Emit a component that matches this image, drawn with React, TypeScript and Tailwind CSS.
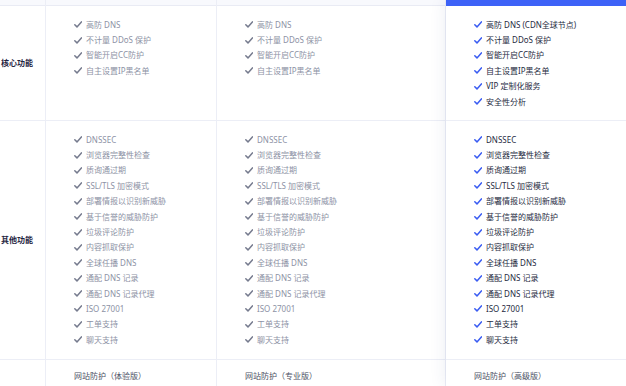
const core1 = ["高防 DNS", "不计量 DDoS 保护", "智能开启CC防护", "自主设置IP黑名单"];
const core3 = ["高防 DNS (CDN全球节点)", "不计量 DDoS 保护", "智能开启CC防护", "自主设置IP黑名单", "VIP 定制化服务", "安全性分析"];
const other = [
  "DNSSEC",
  "浏览器完整性检查",
  "质询通过期",
  "SSL/TLS 加密模式",
  "部署情报以识别新威胁",
  "基于信誉的威胁防护",
  "垃圾评论防护",
  "内容抓取保护",
  "全球任播 DNS",
  "通配 DNS 记录",
  "通配 DNS 记录代理",
  "ISO 27001",
  "工单支持",
  "聊天支持",
];

function Check({ active }: { active?: boolean }) {
  return (
    <svg width="8" height="7" viewBox="0 0 8 7" className="shrink-0">
      <path
        d="M0.8 3.7 L3 5.9 L7.4 0.9"
        fill="none"
        stroke={active ? "#3a5cf2" : "#767b8e"}
        strokeWidth="1.5"
        strokeLinecap="round"
        strokeLinejoin="round"
      />
    </svg>
  );
}

function List({ items, active }: { items: string[]; active?: boolean }) {
  return (
    <ul className="pl-[28px] pt-[11px]">
      {items.map((t) => (
        <li key={t} className="flex items-center gap-[4px] h-[15.4px]">
          <Check active={active} />
          <span className={active ? "text-[#262b42]" : "text-[#8d92a5]"}>{t}</span>
        </li>
      ))}
    </ul>
  );
}

function Column({
  core,
  plan,
  active,
  w,
  last,
}: {
  core: string[];
  plan: string;
  active?: boolean;
  w: string;
  last?: boolean;
}) {
  return (
    <div
      className={`${w} flex flex-col bg-white ${
        active ? "relative z-10 shadow-[0_0_16px_rgba(40,60,130,0.10)]" : ""
      } ${last ? "" : "border-r border-[#eceef6]"}`}
    >
      {active ? (
        <div className="h-[6px] bg-[#3d62f7]" />
      ) : (
        <div className="h-[6px] bg-[#f8f9fd] border-b border-[#e9ebf4]" />
      )}
      <div className="h-[115px] border-b border-[#eceef6]">
        <List items={core} active={active} />
      </div>
      <div className="h-[239px] border-b border-[#eceef6]">
        <List items={other} active={active} />
      </div>
      <div className="flex-1 pl-[28px] pt-[8px] leading-[15.4px] text-[#4b5064]">{plan}</div>
    </div>
  );
}

export default function App() {
  return (
    <div
      className="w-[626px] h-[386px] overflow-hidden bg-white flex text-[8px]"
      style={{ fontFamily: '"Noto Sans", "Noto Sans CJK SC", sans-serif' }}
    >
      <div className="w-[46px] flex flex-col border-r border-[#eceef6]">
        <div className="h-[6px] bg-[#f8f9fd] border-b border-[#e9ebf4]" />
        <div className="h-[115px] border-b border-[#eceef6] flex items-center justify-end pr-[12px] font-bold text-[#1f2442]">
          核心功能
        </div>
        <div className="h-[239px] border-b border-[#eceef6] flex items-center justify-end pr-[12px] font-bold text-[#1f2442]">
          其他功能
        </div>
        <div className="flex-1" />
      </div>
      <Column core={core1} plan="网站防护（体验版）" w="w-[171px]" />
      <Column core={core1} plan="网站防护（专业版）" w="w-[229px]" />
      <Column core={core3} plan="网站防护（高级版）" w="w-[180px]" active last />
    </div>
  );
}
